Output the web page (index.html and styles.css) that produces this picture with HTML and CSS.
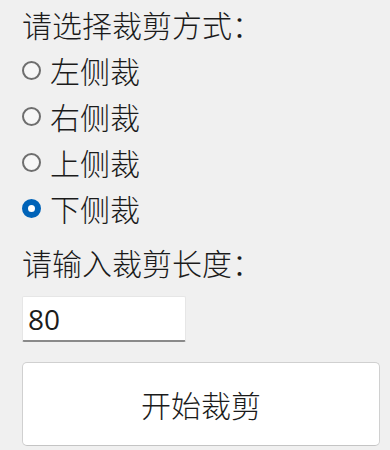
FILE: index.html
```html
<html lang="zh-CN">
  <head>
    <meta charset="UTF-8" />
    <meta name="viewport" content="width=device-width, initial-scale=1.0" />
    <title>裁剪</title>
    <link rel="stylesheet" href="styles.css">
  </head>
  <body>
    <div class="panel">
      <div class="title">请选择裁剪方式：</div>
      <label class="option"><input type="radio" name="mode" /><span>左侧裁</span></label>
      <label class="option"><input type="radio" name="mode" /><span>右侧裁</span></label>
      <label class="option"><input type="radio" name="mode" /><span>上侧裁</span></label>
      <label class="option"><input type="radio" name="mode" checked /><span>下侧裁</span></label>
      <div class="title lenTitle">请输入裁剪长度：</div>
      <input class="lenInput" type="text" value="80" />
      <button class="startBtn">开始裁剪</button>
    </div>
  </body>
</html>
```

FILE: styles.css
```css
* {
  margin: 0;
  padding: 0;
  box-sizing: border-box;
}
body {
  background: #f0f0f0;
  font-family: "Noto Sans CJK SC", "Noto Sans", sans-serif;
  font-weight: 300;
  color: #1b1b1b;
}
.panel {
  padding: 1px 10px 0 22px;
  display: flex;
  flex-direction: column;
  align-items: flex-start;
}
.title {
  font-size: 30px;
  line-height: 46px;
  height: 46px;
}
.option {
  display: flex;
  align-items: center;
  height: 46px;
  font-size: 30px;
  line-height: 46px;
  user-select: none;
}
.option input {
  appearance: none;
  width: 19px;
  height: 19px;
  border: 2px solid #6e6e6e;
  border-radius: 50%;
  background: #f6f6f6;
  margin-right: 9px;
}
.option input:checked {
  border: 6px solid #0063b8;
  background: #ffffff;
}
.lenTitle {
  margin-top: 8px;
}
.lenInput {
  margin-top: 11px;
  width: 164px;
  height: 46px;
  border: 1px solid #e6e6e6;
  border-bottom: 2px solid #8a8a8a;
  border-radius: 2px;
  background: #ffffff;
  font-family: "Open Sans", "Noto Sans", sans-serif;
  font-weight: 400;
  font-size: 28px;
  color: #1b1b1b;
  padding: 0 5px;
  outline: none;
}
.startBtn {
  margin-top: 20px;
  width: 358px;
  height: 84px;
  border: 1px solid #d0d0d0;
  border-bottom-color: #c4c4c4;
  border-radius: 5px;
  background: #ffffff;
  font-family: "Noto Sans CJK SC", sans-serif;
  font-weight: 300;
  font-size: 30px;
  color: #1b1b1b;
}
```
